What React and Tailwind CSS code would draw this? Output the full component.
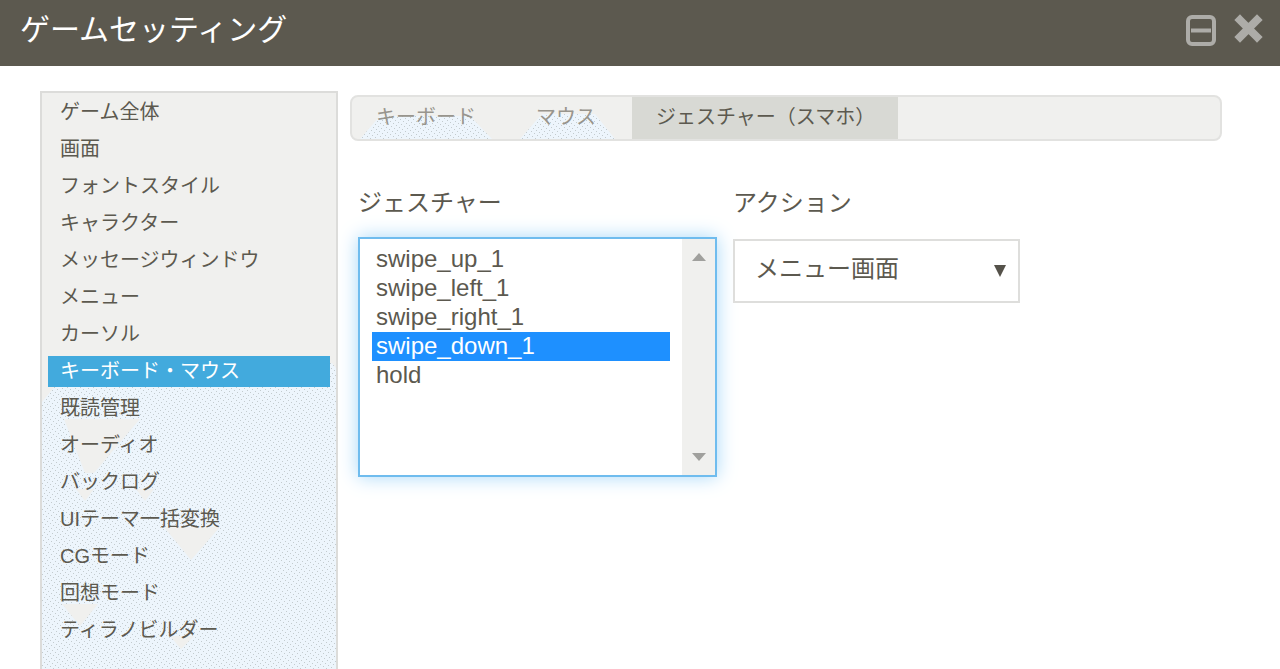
const menuItems = [
    "ゲーム全体",
    "画面",
    "フォントスタイル",
    "キャラクター",
    "メッセージウィンドウ",
    "メニュー",
    "カーソル",
    "キーボード・マウス",
    "既読管理",
    "オーディオ",
    "バックログ",
    "UIテーマ一括変換",
    "CGモード",
    "回想モード",
    "ティラノビルダー",
];

const gestures = ["swipe_up_1", "swipe_left_1", "swipe_right_1", "swipe_down_1", "hold"];

// speckled light blue fill shared by the sidebar and the tabs
const Speckle = ({ id }) => (
    <pattern id={id} width="13" height="13" patternUnits="userSpaceOnUse">
        <rect width="13" height="13" fill="#edf5fc" />
        <path
            d="M0 0h1v1h-1zM3 2h1v1h-1zM6 4h1v1h-1zM9 6h1v1h-1zM12 8h1v1h-1zM2 10h1v1h-1zM5 12h1v1h-1zM8 1h1v1h-1zM11 3h1v1h-1zM1 5h1v1h-1zM4 7h1v1h-1zM7 9h1v1h-1zM10 11h1v1h-1z"
            fill="#c3cbce"
        />
    </pattern>
);

const SidebarPattern = () => (
    <svg aria-hidden="true" className="absolute inset-0 h-full w-full">
        <defs>
            <Speckle id="sidebar-speckle" />
        </defs>
        <path d="M0 309 L14 292 H288 V270 H290 L296 278 V2000 H0 Z" fill="url(#sidebar-speckle)" />
        <path
            d="M22 326 H98 L52 380 H43 Z M34 396 H52 L43 408 Z M94 396 H112 L103 408 Z M122 434 H178 L149 467 Z M20 511 H56 L38 533 Z M128 543 H152 L139 556 Z"
            fill="#f0f0ee"
        />
    </svg>
);

const TabPattern = ({ id, points, className }) => (
    <svg
        aria-hidden="true"
        viewBox="0 0 132 25"
        className={className}
    >
        <defs>
            <Speckle id={id} />
        </defs>
        <polygon points={points} fill={`url(#${id})`} />
    </svg>
);

const Header = () => (
    <header className="flex h-[66px] items-start justify-between bg-[#5c594f] pl-5 pr-[15px] text-[#adaca8]">
        <h1 className="pt-2 text-[30px] leading-[44px] text-white">ゲームセッティング</h1>
        <div className="flex gap-4 pt-[14px]">
            <button type="button" aria-label="最小化">
                <svg width="32" height="32" viewBox="0 0 32 32" fill="none" stroke="currentColor">
                    <rect x="3" y="3" width="26" height="27" rx="4" strokeWidth="4" />
                    <path d="M6 16.5H26" strokeWidth="4" />
                </svg>
            </button>
            <button type="button" aria-label="閉じる">
                <svg width="32" height="32" viewBox="0 0 32 32" fill="none" stroke="currentColor">
                    <path d="M7 6L24 23M24 6L7 23" strokeWidth="8" strokeLinecap="square" />
                </svg>
            </button>
        </div>
    </header>
);

const Sidebar = () => (
    <nav className="relative w-[298px] shrink-0 border-2 border-b-0 border-[#dcdcda] bg-[#f0f0ee]">
        <SidebarPattern />
        <ul className="relative px-[6px]">
            {menuItems.map((item) => (
                <li key={item} className="h-[37px] pt-1">
                    <a
                        href="#"
                        className={
                            item === "キーボード・マウス"
                                ? "block h-[31px] bg-[#42aadd] px-3 text-xl leading-[31px] text-white"
                                : "block px-3 text-xl leading-[31px]"
                        }
                    >
                        {item}
                    </a>
                </li>
            ))}
        </ul>
    </nav>
);

const Tabs = () => (
    <div
        role="tablist"
        className="flex h-[46px] overflow-hidden rounded-lg border-2 border-[#e2e2e0] bg-[#f0f0ee] text-xl"
    >
        <button type="button" role="tab" className="relative w-[160px] pb-[2px] pl-6 text-left text-[#98958d]">
            <TabPattern
                id="keyboard-speckle"
                points="0,25 20,2 110,2 132,25"
                className="absolute bottom-0 left-2 h-[25px] w-[132px]"
            />
            <span className="relative">キーボード</span>
        </button>
        <button type="button" role="tab" className="relative w-[120px] pb-[2px] pl-6 text-left text-[#98958d]">
            <TabPattern
                id="mouse-speckle"
                points="8,25 30,0 83,0 103,25"
                className="absolute bottom-0 left-0 h-[25px] w-[132px]"
            />
            <span className="relative">マウス</span>
        </button>
        <button type="button" role="tab" aria-selected="true" className="w-[266px] bg-[#d8d9d4] pb-[2px] pl-6 text-left">
            ジェスチャー（スマホ）
        </button>
    </div>
);

const GestureList = () => (
    <div>
        <label htmlFor="gesture" className="block text-2xl leading-8">
            ジェスチャー
        </label>
        <div className="mt-[18px] flex h-[240px] w-[359px] border-2 border-[#6fbcee] bg-white shadow-[0_0_18px_#a8d8f8]">
            <select
                id="gesture"
                multiple
                defaultValue={["swipe_down_1"]}
                className="min-w-0 flex-1 overflow-hidden py-[6px] pl-3 pr-3 text-2xl outline-none"
            >
                {gestures.map((gesture) => (
                    <option
                        key={gesture}
                        className="h-[29px] px-1 py-0 leading-[29px] checked:bg-[linear-gradient(#1e90ff,#1e90ff)] checked:text-white"
                    >
                        {gesture}
                    </option>
                ))}
            </select>
            <div className="flex w-[33px] flex-col items-center justify-between bg-[#f0f0ee] py-[13px] text-[#a0a09d]">
                <svg width="16" height="10" viewBox="0 0 16 10" fill="currentColor">
                    <path d="M8 1L15 9H1Z" />
                </svg>
                <svg width="16" height="10" viewBox="0 0 16 10" fill="currentColor">
                    <path d="M1 1H15L8 9Z" />
                </svg>
            </div>
        </div>
    </div>
);

const ActionSelect = () => (
    <div>
        <label htmlFor="action" className="block text-2xl leading-8">
            アクション
        </label>
        <div className="relative mt-5 w-[287px]">
            <select
                id="action"
                className="h-[64px] w-full appearance-none border-2 border-[#dededc] bg-white pb-1 pl-5 text-2xl"
            >
                <option>メニュー画面</option>
            </select>
            <svg
                width="12"
                height="12"
                viewBox="0 0 12 12"
                fill="#55524a"
                className="pointer-events-none absolute right-[14px] top-[26px]"
            >
                <path d="M0 0H12L6 12Z" />
            </svg>
        </div>
    </div>
);

const App = () => {
    return (
        <div className="flex min-h-screen flex-col bg-white font-['Liberation_Sans','Noto_Sans_CJK_JP',sans-serif] text-[#5c594f]">
            <Header />
            <main className="flex flex-1 pl-10 pr-[58px] pt-[25px]">
                <Sidebar />
                <section className="min-w-0 flex-1 pl-3 pt-1">
                    <Tabs />
                    <div className="flex gap-4 pl-2 pt-[46px]">
                        <GestureList />
                        <ActionSelect />
                    </div>
                </section>
            </main>
        </div>
    );
};

export default App;
